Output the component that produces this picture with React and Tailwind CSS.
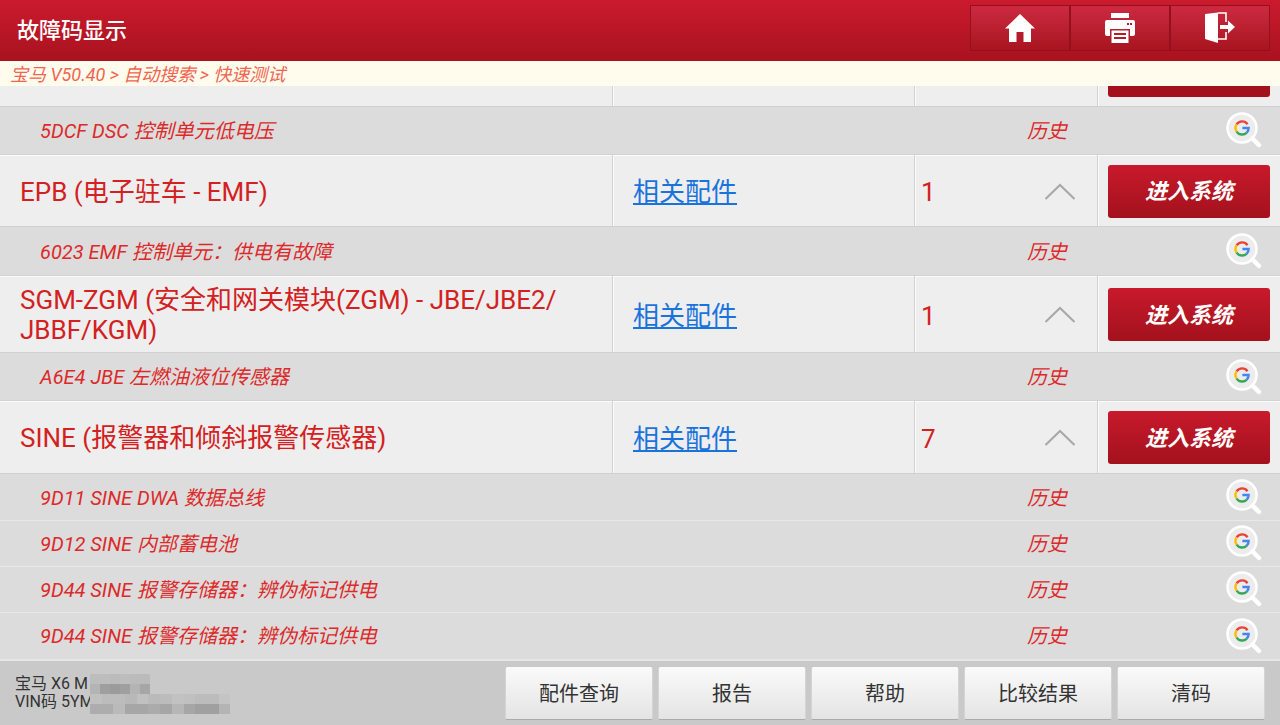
const font = { fontFamily: 'Roboto, "Noto Sans CJK SC", sans-serif' };

function GoogleLens() {
  return (
    <svg width="36" height="38" viewBox="0 0 36 38" className="shrink-0">
      <circle cx="16" cy="16" r="14.5" fill="#ececec" stroke="#fff" strokeWidth="2.5" />
      <path d="M26.5 26.5 L33 33" stroke="#fff" strokeWidth="4.5" strokeLinecap="round" />
      <path d="M21.5 12.2 A6.6 6.6 0 0 0 10.6 12.4" fill="none" stroke="#ea4335" strokeWidth="2.4" />
      <path d="M10.6 12.4 A6.6 6.6 0 0 0 10.6 19.6" fill="none" stroke="#fbbc05" strokeWidth="2.4" />
      <path d="M10.6 19.6 A6.6 6.6 0 0 0 20.8 20.6" fill="none" stroke="#34a853" strokeWidth="2.4" />
      <path d="M20.8 20.6 A6.6 6.6 0 0 0 22.6 16 H16.4" fill="none" stroke="#4285f4" strokeWidth="2.4" />
    </svg>
  );
}

function Fault({ text, h = "h-[46px]", border = true }) {
  return (
    <div className={`${h} flex items-center bg-[#dcdcdc] text-[#dc2a2a] text-[20px] italic ${border ? "border-b border-[#e8e8e8]" : ""}`}>
      <div className="pl-10 w-[1027px] shrink-0 whitespace-nowrap">{text}</div>
      <div className="w-[199px] shrink-0 text-[20px]">历史</div>
      <div className="mt-[1px]"><GoogleLens /></div>
    </div>
  );
}

function EnterButton() {
  return (
    <div className="w-[162px] h-[53px] mt-[1px] pt-[1px] rounded-[3px] flex items-center justify-center bg-gradient-to-b from-[#c81a2c] to-[#a3111c] text-white text-[22px] font-bold italic">
      进入系统
    </div>
  );
}

const divider = "border-l border-[#d2d2d2] shadow-[inset_1px_0_0_#fbfbfb]";

function SystemRow({ name, count, h }) {
  return (
    <div className={`${h} flex bg-[#eeeeee] border-t border-[#d2d2d2] border-b border-b-[#d0d0d0] shadow-[inset_0_1px_0_#fbfbfb] mb-px`}>
      <div className="w-[612px] shrink-0 pl-5 pr-10 pt-[2px] flex items-center text-[#d32020] text-[26px] leading-[30px]">{name}</div>
      <div className={`w-[302px] shrink-0 ${divider} pl-5 pt-[4px] flex items-center text-[#1a73dc] text-[26px] underline`}>相关配件</div>
      <div className={`w-[183px] shrink-0 ${divider} pl-[6px] pr-[22px] pt-[4px] flex items-center justify-between text-[#d32020] text-[26px]`}>
        <span>{count}</span>
        <svg width="30" height="18" viewBox="0 0 30 18" className="-mt-[2px]"><path d="M0.5 16 L15 2 L29.5 16" fill="none" stroke="#a8a8a8" strokeWidth="2" /></svg>
      </div>
      <div className={`flex-1 ${divider} pl-[10px] flex items-center`}><EnterButton /></div>
    </div>
  );
}

function TopButton({ children }) {
  return (
    <div className="w-[100px] h-[46px] border border-[#94101c] flex items-center justify-center bg-gradient-to-b from-[#cc2a40] to-[#a8141f]">
      {children}
    </div>
  );
}

function FootBtn({ children }) {
  return (
    <div className="w-[148px] h-[53px] pt-[2px] flex items-center justify-center rounded-[2px] bg-gradient-to-b from-[#fafafa] to-[#e4e4e4] border-b border-[#aaaaaa] border-x border-x-[#d4d4d4] text-[#333333] text-[20px]">
      {children}
    </div>
  );
}

const mosaicTop = [
  ["#bdbdbd", "#bdbdbd", "#bbbbbb", "#bdbdbd", "#bbbbbb", "#bbbbbb"],
  ["#b4b4b4", "#9f9f9f", "#9b9b9b", "#9f9f9f", "#b4b4b4", "#a6a6a6"],
];
const mosaicBottom = [
  ["#c0c0c0", "#bcbcbc", "#bcbcbc", "#b8b8b8", "#c0c0c0", "#bababa", "#bcbcbc", "#c2c2c2", "#c0c0c0", "#bcbcbc", "#bcbcbc", "#c4c4c4"],
  ["#adadad", "#adadad", "#bababa", "#a6a6a6", "#a6a6a6", "#ababab", "#a6a6a6", "#b6b6b6", "#a6a6a6", "#a0a0a0", "#a0a0a0", "#b4b4b4"],
];

function Mosaic({ rows, cell, className }) {
  return (
    <div className={`absolute ${className}`}>
      {rows.map((r, i) => (
        <div key={i} className="flex">
          {r.map((c, j) => (
            <div key={j} className="h-[10px]" style={{ width: cell, background: c }} />
          ))}
        </div>
      ))}
    </div>
  );
}

export default function App() {
  return (
    <div style={font} className="w-[1280px] h-[725px] flex flex-col overflow-hidden bg-[#dcdcdc]">
      <header className="h-[61px] shrink-0 flex justify-between bg-gradient-to-b from-[#cb1b2e] to-[#a8121e] pl-[17px] pr-[10px]">
        <div className="flex items-center text-white text-[22px] font-medium">故障码显示</div>
        <div className="flex pt-[5px]">
          <TopButton>
            <svg width="30" height="30" viewBox="0 0 30 30" fill="#fff">
              <path d="M15 1 L30 15.5 L26 15.5 L26 29 L18.5 29 L18.5 19 L11.5 19 L11.5 29 L4 29 L4 15.5 L0 15.5 Z" />
            </svg>
          </TopButton>
          <TopButton>
            <svg width="32" height="32" viewBox="0 0 32 32" fill="#fff">
              <rect x="7" y="1" width="18" height="5" />
              <path d="M3 8 H29 Q31 8 31 10 V22 Q31 24 29 24 H26 V17 H6 V24 H3 Q1 24 1 22 V10 Q1 8 3 8 Z" />
              <path d="M7.5 18.5 H24.5 V31 H7.5 Z M10 21 V23 H22 V21 Z M10 25 V27 H22 V25 Z" fillRule="evenodd" />
              <rect x="23" y="11" width="2" height="2" fill="#b5182a" />
              <rect x="26" y="11" width="2" height="2" fill="#b5182a" />
            </svg>
          </TopButton>
          <TopButton>
            <svg width="32" height="32" viewBox="0 0 32 32" fill="#fff">
              <path d="M1 2 L14 0.5 V31 L1 27 Z" />
              <path d="M14 1 H22 V10 M22 20 V27 H14" fill="none" stroke="#fff" strokeWidth="1.6" />
              <path d="M16 13 H24 V8.5 L31 15 L24 21.5 V17 H16 Z" />
            </svg>
          </TopButton>
        </div>
      </header>

      <div className="h-[25px] shrink-0 bg-[#fffcee] pl-[10px] pt-[2px] flex items-center text-[#f0654f] text-[18px] italic whitespace-nowrap">
        宝马 V50.40 &gt; 自动搜索 &gt; 快速测试
      </div>

      <main className="flex-1 min-h-0 overflow-hidden flex flex-col">
        <div className="h-[21px] shrink-0 flex bg-[#eeeeee] border-b border-[#d0d0d0]">
          <div className="w-[612px] shrink-0" />
          <div className={`w-[302px] shrink-0 ${divider}`} />
          <div className={`w-[183px] shrink-0 ${divider}`} />
          <div className={`flex-1 ${divider} pl-[10px]`}>
            <div className="w-[162px] h-[11px] rounded-b-[3px] bg-[#a3111c]" />
          </div>
        </div>
        <Fault text="5DCF DSC 控制单元低电压" h="h-[47px]" border={false} />
        <SystemRow name="EPB (电子驻车 - EMF)" count="1" h="h-[73px]" />
        <Fault text="6023 EMF 控制单元：供电有故障" h="h-[47px]" border={false} />
        <SystemRow name={<>SGM-ZGM (安全和网关模块(ZGM) - JBE/JBE2/<wbr />JBBF/KGM)</>} count="1" h="h-[78px]" />
        <Fault text="A6E4 JBE 左燃油液位传感器" h="h-[46px]" border={false} />
        <SystemRow name="SINE (报警器和倾斜报警传感器)" count="7" h="h-[74px]" />
        <Fault text="9D11 SINE DWA 数据总线" />
        <Fault text="9D12 SINE 内部蓄电池" />
        <Fault text="9D44 SINE 报警存储器：辨伪标记供电" />
        <Fault text="9D44 SINE 报警存储器：辨伪标记供电" h="h-[46px]" border={false} />
      </main>

      <footer className="h-[66px] shrink-0 flex items-center justify-between bg-[#c9c9c9] border-t-2 border-[#e6e6e6] pr-[15px]">
        <div className="relative pl-[15px] text-[#333333] text-[16px] leading-[18px] whitespace-nowrap">
          <div>宝马 X6 M</div>
          <div>VIN码 5YM</div>
          <Mosaic rows={mosaicTop} cell={10} className="left-[90px] -top-[1px]" />
          <Mosaic rows={mosaicBottom} cell={11.7} className="left-[90px] top-[19px]" />
        </div>
        <div className="flex gap-[5px]">
          <FootBtn>配件查询</FootBtn>
          <FootBtn>报告</FootBtn>
          <FootBtn>帮助</FootBtn>
          <FootBtn>比较结果</FootBtn>
          <FootBtn>清码</FootBtn>
        </div>
      </footer>
    </div>
  );
}
